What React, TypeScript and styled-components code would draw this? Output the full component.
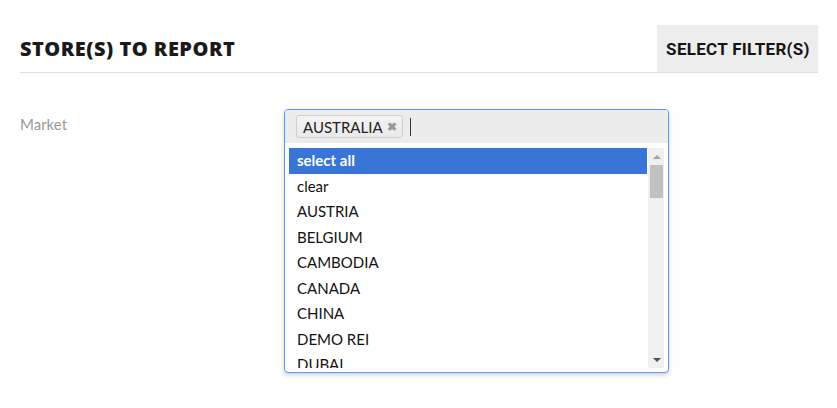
import React from "react";
import styled, { createGlobalStyle } from "styled-components";

const Global = createGlobalStyle`
  html, body { margin: 0; padding: 0; background: #fff; }
  body { font-family: "Lato", "Noto Sans", sans-serif; color: #222; }
  * { box-sizing: border-box; }
`;

const Page = styled.div`
  width: 837px;
  height: 408px;
  padding: 25px 19px 0 20px;
`;

const Header = styled.div`
  display: flex;
  align-items: stretch;
  justify-content: space-between;
  height: 48px;
  border-bottom: 1px solid #dedede;
`;

const Title = styled.h1`
  margin: 0;
  display: flex;
  align-items: center;
  font-family: "Open Sans", sans-serif;
  font-weight: 800;
  font-size: 20px;
  letter-spacing: 0.5px;
  color: #1a1a1a;
`;

const FilterButton = styled.button`
  border: 0;
  background: #ededed;
  width: 161px;
  padding: 0 0 0 1px;
  font-family: Roboto, "Liberation Sans", sans-serif;
  font-weight: 700;
  font-size: 17px;
  letter-spacing: 0.3px;
  color: #151515;
  cursor: pointer;
`;

const FormRow = styled.div`
  display: grid;
  grid-template-columns: 264px 385px;
  margin-top: 36px;
`;

const Label = styled.label`
  font-size: 15px;
  color: #999;
  padding-top: 6px;
`;

const Chosen = styled.div`
  border: 1px solid #5897fb;
  border-radius: 4px;
  box-shadow: 0 2px 4px rgba(0, 0, 0, 0.18);
  background: #fff;
  overflow: hidden;
`;

const Choices = styled.div`
  display: flex;
  align-items: center;
  gap: 7px;
  height: 33px;
  padding: 0 11px;
  background: #ececec;
`;

const Tag = styled.span`
  display: inline-flex;
  align-items: center;
  gap: 4px;
  height: 23px;
  padding: 0 5px 0 6px;
  border: 1px solid #cfcfcf;
  border-radius: 3px;
  background: linear-gradient(#f4f4f4, #eaeaea);
  font-size: 15px;
  color: #222;
`;

const Remove = styled.span`
  font-size: 12px;
  font-weight: 900;
  color: #999;
  line-height: 1;
`;

const Caret = styled.span`
  width: 1px;
  height: 18px;
  background: #333;
`;

const Drop = styled.div`
  display: flex;
  gap: 1px;
  height: 220px;
  margin: 5px 4px 4px 0;
  padding-left: 4px;
`;

const Results = styled.ul`
  list-style: none;
  flex: 1;
  margin: 0;
  padding: 0;
  overflow: hidden;
`;

const Item = styled.li<{ $active?: boolean }>`
  height: 25.5px;
  line-height: 25.5px;
  padding: 0 8px;
  font-size: 15px;
  white-space: nowrap;
  color: ${(p) => (p.$active ? "#fff" : "#111")};
  background: ${(p) => (p.$active ? "#3875d7" : "transparent")};
  font-weight: ${(p) => (p.$active ? 700 : 400)};
`;

const ScrollBar = styled.div`
  width: 16px;
  display: flex;
  flex-direction: column;
  padding: 0 1px 0 2px;
  background: #f0f0f0;
`;

const ArrowButton = styled.div`
  height: 17px;
  display: flex;
  align-items: center;
  justify-content: center;
`;

const Track = styled.div`
  flex: 1;
  display: flex;
  flex-direction: column;
`;

const Thumb = styled.div`
  width: 13px;
  height: 33px;
  background: #c1c1c1;
`;

const options = ["clear", "AUSTRIA", "BELGIUM", "CAMBODIA", "CANADA", "CHINA", "DEMO REI", "DUBAI"];

export default function App() {
  return (
    <Page>
      <Global />
      <Header>
        <Title>STORE(S) TO REPORT</Title>
        <FilterButton>SELECT FILTER(S)</FilterButton>
      </Header>
      <FormRow>
        <Label>Market</Label>
        <Chosen>
          <Choices>
            <Tag>
              AUSTRALIA<Remove>✖</Remove>
            </Tag>
            <Caret />
          </Choices>
          <Drop>
            <Results>
              <Item $active>select all</Item>
              {options.map((o) => (
                <Item key={o}>{o}</Item>
              ))}
            </Results>
            <ScrollBar>
              <ArrowButton>
                <svg width="8" height="4" viewBox="0 0 8 4">
                  <path d="M0 4 L4 0 L8 4 Z" fill="#a3a3a3" />
                </svg>
              </ArrowButton>
              <Track>
                <Thumb />
              </Track>
              <ArrowButton>
                <svg width="8" height="4" viewBox="0 0 8 4">
                  <path d="M0 0 L8 0 L4 4 Z" fill="#505050" />
                </svg>
              </ArrowButton>
            </ScrollBar>
          </Drop>
        </Chosen>
      </FormRow>
    </Page>
  );
}
